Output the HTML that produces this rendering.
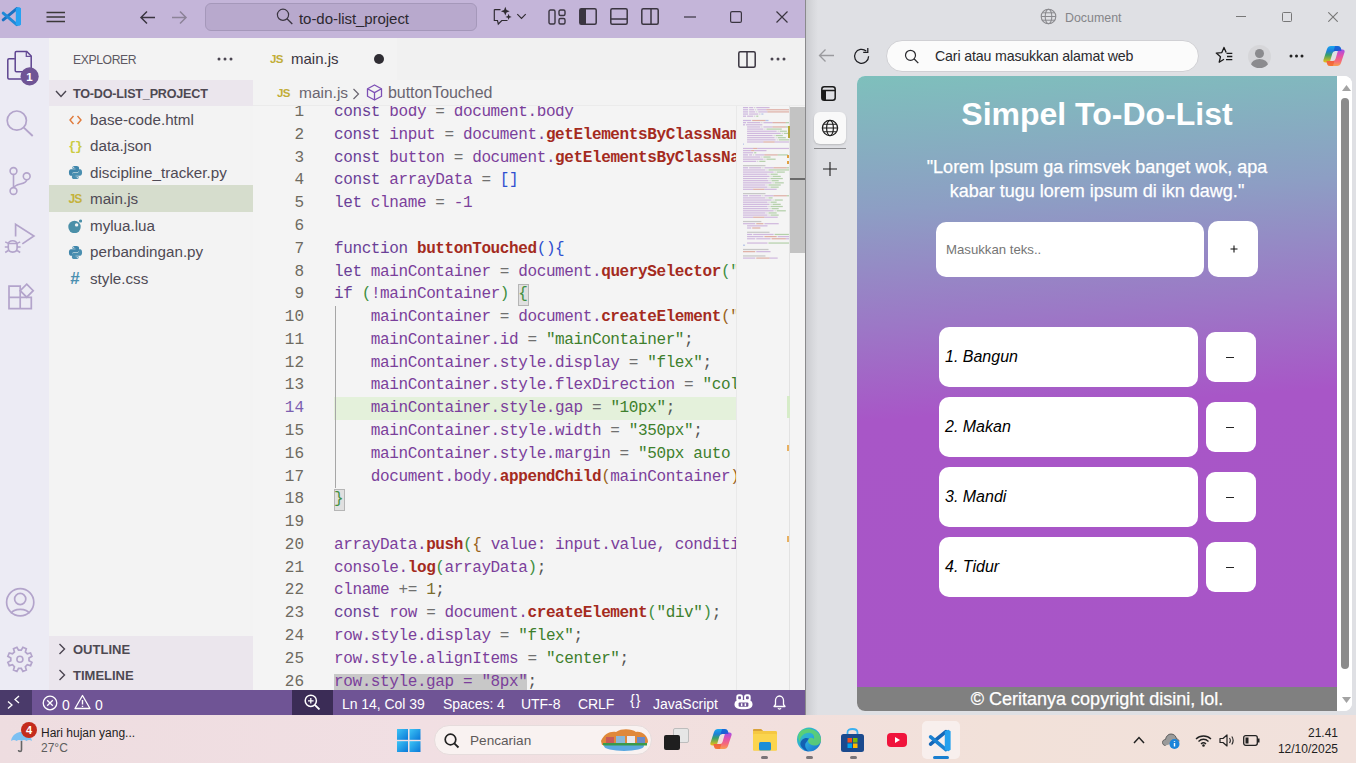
<!DOCTYPE html>
<html><head><meta charset="utf-8">
<style>
*{margin:0;padding:0;box-sizing:border-box}
html,body{width:1356px;height:763px;overflow:hidden;background:#f0e0e4;font-family:"Liberation Sans",sans-serif}
.a{position:absolute}
#vs{left:0;top:0;width:805px;height:715px;background:#f3f3f3;overflow:hidden}
#tb{left:0;top:0;width:806px;height:38px;background:#c4b5d9}
#act{left:0;top:38px;width:49px;height:652px;background:#ecebf4}
#side{left:49px;top:38px;width:204px;height:652px;background:#f3f3f3}
#ed{left:253px;top:38px;width:553px;height:652px;background:#f4f4f4}
#sb{left:0;top:690px;width:806px;height:25px;background:#6f5495;color:#fff;font-size:15px}
#edge{left:806px;top:0;width:550px;height:715px;background:#dfe0e4}
#task{left:0;top:715px;width:1356px;height:48px;background:linear-gradient(to right,#eedde0 0px,#f1dfe3 420px,#f2e0dd 800px,#f2e1d9 1000px,#f1e1dc 1356px)}
.sbt{font-size:15.2px;color:#4f4a55;white-space:pre}
.ln{left:0;width:51px;text-align:right;font-family:"Liberation Mono",monospace;font-size:16px;line-height:22.78px}
.code{left:81px;line-height:22.78px}
.k{color:#6a3f97}.v{color:#7b3f9b}.o{color:#707070}.f{color:#a42b1e;font-weight:bold}.s{color:#3e7f2c}.n{color:#7a6c2a}.b1{color:#2f4fd0}.b2{color:#3f8f3f}.b3{color:#9a6320}.p{color:#555}.bx{color:#3f8f3f}.bx2{color:#3f8f3f}.sel{color:#7b3f9b}
.sbx{position:absolute;font-size:14px;color:#fff;letter-spacing:-0.05px;white-space:pre}
.code{position:absolute;font-family:"Liberation Mono",monospace;font-size:16px;letter-spacing:-0.39px;white-space:pre;color:#7b3f9b}
</style></head><body>
<div id="vs" class="a">
  <div id="tb" class="a">
    <svg class="a" style="left:0;top:0" width="24" height="32"><path d="M3.2 19.8L16.8 8.6" stroke="#1a73c4" stroke-width="3" stroke-linecap="round"/><path d="M3.2 13.2L16.8 24.6" stroke="#1f8ad8" stroke-width="3" stroke-linecap="round"/><path d="M15.8 8.2L19 6.9L21 8.2V24.8L19 26.1L15.8 24.8Z" fill="#26a2f2"/></svg>
    <svg class="a" style="left:46px;top:11px" width="20" height="12"><path d="M0.5 1.5H19M0.5 6H19M0.5 10.5H19" stroke="#3a3838" stroke-width="1.5"/></svg>
    <svg class="a" style="left:139px;top:10px" width="17" height="15"><path d="M16 7.5H2M8 1.5L2 7.5L8 13.5" stroke="#3a3540" stroke-width="1.5" fill="none"/></svg>
    <svg class="a" style="left:171px;top:10px" width="17" height="15"><path d="M1 7.5H15M9 1.5L15 7.5L9 13.5" stroke="#8c8398" stroke-width="1.5" fill="none"/></svg>
    <div class="a" style="left:205px;top:3px;width:272px;height:28px;background:#b8a9cd;border:1px solid #a598ba;border-radius:6px"></div>
    <svg class="a" style="left:276px;top:8px" width="18" height="18"><circle cx="7" cy="6.8" r="5.6" stroke="#3a3540" stroke-width="1.2" fill="none"/><path d="M11 10.8L16.3 16" stroke="#3a3540" stroke-width="1.3"/></svg>
    <div class="a" style="left:299px;top:10px;font-size:15px;color:#2c2830;letter-spacing:-0.05px">to-do-list_project</div>
    <svg class="a" style="left:488px;top:4px" width="44" height="26"><path d="M6.3 5.6H12.5M6.3 5.6V16.5H9.5L10.3 20L13.8 16.5H19.5" stroke="#2e2a30" stroke-width="1.15" fill="none" stroke-linejoin="miter"/><path d="M17.3 2.8L18.5 6L21.7 7.2L18.5 8.4L17.3 11.6L16.1 8.4L12.9 7.2L16.1 6Z" fill="#2e2a30"/><path d="M20.6 9.8L21.4 12.1L23.7 12.9L21.4 13.7L20.6 16L19.8 13.7L17.5 12.9L19.8 12.1Z" fill="#2e2a30"/><path d="M29.3 10.2L33.5 14.4L37.7 10.2" stroke="#2e2a30" stroke-width="1.15" fill="none"/></svg>
    <svg class="a" style="left:548px;top:9px" width="18" height="16"><rect x="1" y="1" width="6" height="14" rx="1.5" stroke="#3a3540" stroke-width="1.4" fill="none"/><rect x="11" y="1" width="6" height="5.5" rx="1.5" stroke="#3a3540" stroke-width="1.4" fill="none"/><rect x="11" y="9.5" width="6" height="5.5" rx="1.5" stroke="#3a3540" stroke-width="1.4" fill="none"/></svg>
    <svg class="a" style="left:579px;top:8px" width="18" height="17"><rect x="0.8" y="0.8" width="16.4" height="15.4" rx="1.5" stroke="#3a3540" stroke-width="1.5" fill="none"/><rect x="1" y="1" width="6" height="15" fill="#3a3540"/></svg>
    <svg class="a" style="left:610px;top:8px" width="18" height="17"><rect x="0.8" y="0.8" width="16.4" height="15.4" rx="1.5" stroke="#3a3540" stroke-width="1.5" fill="none"/><path d="M1 11H17" stroke="#3a3540" stroke-width="1.5"/></svg>
    <svg class="a" style="left:641px;top:8px" width="18" height="17"><rect x="0.8" y="0.8" width="16.4" height="15.4" rx="1.5" stroke="#3a3540" stroke-width="1.5" fill="none"/><path d="M10 1V16" stroke="#3a3540" stroke-width="1.5"/></svg>
    <svg class="a" style="left:684px;top:16px" width="12" height="2"><path d="M0 1H12" stroke="#3a3540" stroke-width="1.2"/></svg>
    <svg class="a" style="left:730px;top:11px" width="12" height="12"><rect x="0.6" y="0.6" width="10.8" height="10.8" rx="1.5" stroke="#3a3540" stroke-width="1.2" fill="none"/></svg>
    <svg class="a" style="left:776px;top:11px" width="12" height="12"><path d="M0.5 0.5L11.5 11.5M11.5 0.5L0.5 11.5" stroke="#3a3540" stroke-width="1.2"/></svg>
  </div>
  <div id="act" class="a">
    <svg class="a" style="left:0;top:6px" width="48" height="48"><path d="M14.8 14.8H9Q7.8 14.8 7.8 16V33.7Q7.8 34.9 9 34.9H21" stroke="#5e4490" stroke-width="1.5" fill="none"/><path d="M16.4 7.5H26.8L31.2 12V26.5Q31.2 27.7 30 27.7H16.4Q15.2 27.7 15.2 26.5V8.7Q15.2 7.5 16.4 7.5Z" stroke="#5e4490" stroke-width="1.5" fill="none"/><path d="M26.3 7.5V12.3H31.2" stroke="#6a4f9a" stroke-width="1.3" fill="none"/><circle cx="29.6" cy="32.4" r="9.1" fill="#6f5495"/><text x="29.4" y="36.6" style="font:bold 11.5px 'Liberation Sans'" fill="#fff" text-anchor="middle">1</text></svg>
    <svg class="a" style="left:0;top:0" width="48" height="652" viewBox="0 38 48 652">
    <circle cx="16.8" cy="120.6" r="9.6" stroke="#b3a4cb" stroke-width="1.7" fill="none"/><path d="M23.8 127.6L32.7 136" stroke="#b3a4cb" stroke-width="1.9"/>
    <circle cx="13.5" cy="171" r="3.4" stroke="#b3a4cb" stroke-width="1.6" fill="none"/><circle cx="13.5" cy="191" r="3.4" stroke="#b3a4cb" stroke-width="1.6" fill="none"/><circle cx="26.7" cy="176.3" r="3.4" stroke="#b3a4cb" stroke-width="1.6" fill="none"/>
    <path d="M13.5 174.4V187.6M26.7 179.7C26.7 185 15 183 13.8 187.8" stroke="#b3a4cb" stroke-width="1.6" fill="none"/>
    <path d="M15.6 236.5V224.4L33.9 236L22.3 243.9" stroke="#b3a4cb" stroke-width="1.7" fill="none" stroke-linejoin="miter"/>
    <path d="M8.3 244.5C8.3 239.5 17.1 239.5 17.1 244.5V248C17.1 253.5 8.3 253.5 8.3 248Z" stroke="#b3a4cb" stroke-width="1.6" fill="#ecebf4"/>
    <path d="M8.3 243.6H17.1M5.2 241.8L8.3 243.4M5.2 252.5L8.3 250.5M20.2 241.8L17.1 243.4M20.2 252.5L17.1 250.5M4.8 247H8.3M17.1 247H20.6" stroke="#b3a4cb" stroke-width="1.5"/>
    <path d="M9 286.2H20.2V308.6H9ZM9 297.3H31.3V308.6H20.2" stroke="#b3a4cb" stroke-width="1.7" fill="none" stroke-linejoin="miter"/>
    <path d="M26.7 284.2L33.2 290.7L26.7 297.2L20.2 290.7Z" stroke="#b3a4cb" stroke-width="1.7" fill="none" stroke-linejoin="miter"/>
    <circle cx="20.2" cy="602.3" r="13.6" stroke="#b3a4cb" stroke-width="1.7" fill="none"/><circle cx="20.2" cy="599" r="5.6" stroke="#b3a4cb" stroke-width="1.7" fill="none"/>
    <path d="M11.2 613.5C13.5 608 26.9 608 29.2 613.5" stroke="#b3a4cb" stroke-width="1.7" fill="none"/>
    <path d="M21.26 650.20 L22.90 647.27 L26.29 648.67 L25.37 651.90 L27.30 653.83 L30.53 652.91 L31.93 656.30 L29.00 657.94 L29.00 660.66 L31.93 662.30 L30.53 665.69 L27.30 664.77 L25.37 666.70 L26.29 669.93 L22.90 671.33 L21.26 668.40 L18.54 668.40 L16.90 671.33 L13.51 669.93 L14.43 666.70 L12.50 664.77 L9.27 665.69 L7.87 662.30 L10.80 660.66 L10.80 657.94 L7.87 656.30 L9.27 652.91 L12.50 653.83 L14.43 651.90 L13.51 648.67 L16.90 647.27 L18.54 650.20Z" stroke="#b3a4cb" stroke-width="1.7" fill="none" stroke-linejoin="miter"/><circle cx="19.9" cy="659.3" r="3" stroke="#b3a4cb" stroke-width="1.6" fill="none"/>
  </svg>
  </div>
  <div id="side" class="a">
    <div class="a" style="left:24px;top:15px;font-size:12.2px;color:#5d5862;letter-spacing:-0.4px">EXPLORER</div>
    <svg class="a" style="left:168px;top:19px" width="16" height="4"><circle cx="2" cy="2" r="1.5" fill="#4a4550"/><circle cx="8" cy="2" r="1.5" fill="#4a4550"/><circle cx="14" cy="2" r="1.5" fill="#4a4550"/></svg>
    <div class="a" style="left:0;top:42px;width:204px;height:26px;background:#ebe6ed"></div>
    <svg class="a" style="left:6px;top:52px" width="12" height="8"><path d="M1 1L6 6.5L11 1" stroke="#4a4550" stroke-width="1.4" fill="none"/></svg>
    <div class="a" style="left:24px;top:48.5px;font:bold 12.6px 'Liberation Sans';color:#4e4952;letter-spacing:-0.2px">TO-DO-LIST_PROJECT</div>
    <div class="a" style="left:0;top:68.00px;width:204px;height:26.4px;"><div class="a" style="left:18px;top:6px;width:16px;height:16px;display:flex;align-items:center;justify-content:center"><svg width="13" height="10"><path d="M4.5 1L1 5L4.5 9M8.5 1L12 5L8.5 9" stroke="#e07a3a" stroke-width="1.4" fill="none"/></svg></div><div class="a sbt" style="left:41px;top:5px">base-code.html</div></div>
<div class="a" style="left:0;top:94.45px;width:204px;height:26.4px;"><div class="a" style="left:18px;top:6px;width:16px;height:16px;display:flex;align-items:center;justify-content:center"><span style="color:#cbcb41;font:bold 13px 'Liberation Mono';letter-spacing:-1px">{}</span></div><div class="a sbt" style="left:41px;top:5px">data.json</div></div>
<div class="a" style="left:0;top:120.90px;width:204px;height:26.4px;"><div class="a" style="left:18px;top:6px;width:16px;height:16px;display:flex;align-items:center;justify-content:center"><svg width="15" height="15" viewBox="0 0 16 16"><path d="M7.9 1C4.5 1 4.7 2.5 4.7 2.5V4.1H8V4.6H3.4S1 4.3 1 8S3.1 11.5 3.1 11.5H4.4V9.8S4.3 7.7 6.5 7.7H9.8S11.8 7.7 11.8 5.7V2.8S12.1 1 7.9 1ZM6.1 2C6.5 2 6.7 2.3 6.7 2.6S6.5 3.2 6.1 3.2S5.5 3 5.5 2.6S5.8 2 6.1 2Z" fill="#3f86ab"/><path d="M8.1 15C11.5 15 11.3 13.5 11.3 13.5V11.9H8V11.4H12.6S15 11.7 15 8S12.9 4.5 12.9 4.5H11.6V6.2S11.7 8.3 9.5 8.3H6.2S4.2 8.3 4.2 10.3V13.2S3.9 15 8.1 15ZM9.9 14C9.5 14 9.3 13.7 9.3 13.4S9.5 12.8 9.9 12.8S10.5 13 10.5 13.4S10.2 14 9.9 14Z" fill="#4a8fb0"/></svg></div><div class="a sbt" style="left:41px;top:5px">discipline_tracker.py</div></div>
<div class="a" style="left:0;top:147.35px;width:204px;height:26.4px;background:#d6ddcd;"><div class="a" style="left:18px;top:6px;width:16px;height:16px;display:flex;align-items:center;justify-content:center"><span style="color:#c4b23c;font:bold 12px 'Liberation Sans';letter-spacing:-0.8px">JS</span></div><div class="a sbt" style="left:41px;top:5px">main.js</div></div>
<div class="a" style="left:0;top:173.80px;width:204px;height:26.4px;"><div class="a" style="left:18px;top:6px;width:16px;height:16px;display:flex;align-items:center;justify-content:center"><svg width="14" height="14"><circle cx="6.5" cy="8" r="6.2" fill="#4a8fa8"/><circle cx="8.6" cy="5.9" r="1.7" fill="#f3f3f3"/><circle cx="12.5" cy="2" r="1.6" fill="#4a8fa8"/></svg></div><div class="a sbt" style="left:41px;top:5px">mylua.lua</div></div>
<div class="a" style="left:0;top:200.25px;width:204px;height:26.4px;"><div class="a" style="left:18px;top:6px;width:16px;height:16px;display:flex;align-items:center;justify-content:center"><svg width="15" height="15" viewBox="0 0 16 16"><path d="M7.9 1C4.5 1 4.7 2.5 4.7 2.5V4.1H8V4.6H3.4S1 4.3 1 8S3.1 11.5 3.1 11.5H4.4V9.8S4.3 7.7 6.5 7.7H9.8S11.8 7.7 11.8 5.7V2.8S12.1 1 7.9 1ZM6.1 2C6.5 2 6.7 2.3 6.7 2.6S6.5 3.2 6.1 3.2S5.5 3 5.5 2.6S5.8 2 6.1 2Z" fill="#3f86ab"/><path d="M8.1 15C11.5 15 11.3 13.5 11.3 13.5V11.9H8V11.4H12.6S15 11.7 15 8S12.9 4.5 12.9 4.5H11.6V6.2S11.7 8.3 9.5 8.3H6.2S4.2 8.3 4.2 10.3V13.2S3.9 15 8.1 15ZM9.9 14C9.5 14 9.3 13.7 9.3 13.4S9.5 12.8 9.9 12.8S10.5 13 10.5 13.4S10.2 14 9.9 14Z" fill="#4a8fb0"/></svg></div><div class="a sbt" style="left:41px;top:5px">perbandingan.py</div></div>
<div class="a" style="left:0;top:226.70px;width:204px;height:26.4px;"><div class="a" style="left:18px;top:6px;width:16px;height:16px;display:flex;align-items:center;justify-content:center"><span style="color:#4a8fb0;font:bold 17px 'Liberation Sans'">#</span></div><div class="a sbt" style="left:41px;top:5px">style.css</div></div>

    <div class="a" style="left:0;top:598px;width:204px;height:54px;background:#ebe6ed"></div>
    <svg class="a" style="left:9px;top:605px" width="8" height="12"><path d="M1.5 1L6.5 6L1.5 11" stroke="#4a4550" stroke-width="1.4" fill="none"/></svg>
    <div class="a" style="left:24px;top:604px;font:bold 13px 'Liberation Sans';color:#4e4952">OUTLINE</div>
    <svg class="a" style="left:9px;top:631px" width="8" height="12"><path d="M1.5 1L6.5 6L1.5 11" stroke="#4a4550" stroke-width="1.4" fill="none"/></svg>
    <div class="a" style="left:24px;top:630px;font:bold 13px 'Liberation Sans';color:#4e4952">TIMELINE</div>
  </div>
  <div id="ed" class="a">
    <div class="a" style="left:0;top:0;width:144px;height:42px;background:#f3f3f3"></div>
    <div class="a" style="left:144px;top:0;width:409px;height:42px;background:#f1f1f1"></div>
    <div class="a" style="left:17px;top:14.5px;font:bold 11.5px 'Liberation Sans';color:#c1ad37;letter-spacing:-0.6px">JS</div>
    <div class="a" style="left:38px;top:12px;font-size:15px;color:#3a3540">main.js</div>
    <div class="a" style="left:121px;top:16px;width:10px;height:10px;border-radius:50%;background:#2f2d33"></div>
    <svg class="a" style="left:485px;top:13px" width="18" height="17"><rect x="0.8" y="0.8" width="16.4" height="15.4" rx="1.5" stroke="#3a3540" stroke-width="1.5" fill="none"/><path d="M9 1V16" stroke="#3a3540" stroke-width="1.5"/></svg>
    <svg class="a" style="left:517px;top:19px" width="16" height="4"><circle cx="2" cy="2" r="1.5" fill="#4a4550"/><circle cx="8" cy="2" r="1.5" fill="#4a4550"/><circle cx="14" cy="2" r="1.5" fill="#4a4550"/></svg>
<!--CODE--><div class="a" style="left:0;top:42px;width:553px;height:610px;background:#f4f4f4;overflow:hidden">
      <div class="a" style="left:0;top:0;width:483px;height:610px;overflow:hidden">
      <div class="a" style="left:81px;top:317.2px;width:402px;height:22.78px;background:#e4f1db"></div>
      <div class="a" style="left:81px;top:593.6px;width:193px;height:19.78px;background:#c8c8c8"></div>
      <div class="a" style="left:82px;top:226.1px;width:1px;height:182.2px;background:#a6a6a6"></div>
      <div class="a" style="left:265.2px;top:204.4px;width:11.2px;height:21.8px;border:1px solid #b5b5b5;background:#e0e0e0"></div>
      <div class="a" style="left:81px;top:409.4px;width:11.2px;height:21.8px;border:1px solid #b5b5b5;background:#e0e0e0"></div>
      <div class="a ln" style="top:21.11px;color:#6e6a60">1</div><div class="a code" style="top:21.11px"><span class="k">const</span><span class="v"> body </span><span class="o">=</span><span class="v"> document.body</span></div>
<div class="a ln" style="top:43.89px;color:#6e6a60">2</div><div class="a code" style="top:43.89px"><span class="k">const</span><span class="v"> input </span><span class="o">=</span><span class="v"> document.</span><span class="f">getElementsByClassName</span><span class="b2">(&quot;</span><span class="s">input</span></div>
<div class="a ln" style="top:66.67px;color:#6e6a60">3</div><div class="a code" style="top:66.67px"><span class="k">const</span><span class="v"> button </span><span class="o">=</span><span class="v"> document.</span><span class="f">getElementsByClassName</span><span class="b2">(</span></div>
<div class="a ln" style="top:89.45px;color:#6e6a60">4</div><div class="a code" style="top:89.45px"><span class="k">const</span><span class="v"> arrayData </span><span class="o">=</span><span class="v"> </span><span class="b1">[]</span></div>
<div class="a ln" style="top:112.23px;color:#6e6a60">5</div><div class="a code" style="top:112.23px"><span class="k">let</span><span class="v"> clname </span><span class="o">=</span><span class="v"> </span><span class="v">-1</span></div>
<div class="a ln" style="top:135.01px;color:#6e6a60">6</div><div class="a code" style="top:135.01px"></div>
<div class="a ln" style="top:157.79px;color:#6e6a60">7</div><div class="a code" style="top:157.79px"><span class="k">function</span><span class="v"> </span><span class="f">buttonTouched</span><span class="b1">(){</span></div>
<div class="a ln" style="top:180.57px;color:#6e6a60">8</div><div class="a code" style="top:180.57px"><span class="k">let</span><span class="v"> mainContainer </span><span class="o">=</span><span class="v"> document.</span><span class="f">querySelector</span><span class="b2">(&quot;</span></div>
<div class="a ln" style="top:203.35px;color:#6e6a60">9</div><div class="a code" style="top:203.35px"><span class="k">if</span><span class="v"> </span><span class="b2">(</span><span class="v">!mainContainer</span><span class="b2">)</span><span class="v"> </span><span class="bx">{</span></div>
<div class="a ln" style="top:226.13px;color:#6e6a60">10</div><div class="a code" style="top:226.13px"><span class="v">    mainContainer </span><span class="o">=</span><span class="v"> document.</span><span class="f">createElement</span><span class="b3">(&quot;</span></div>
<div class="a ln" style="top:248.91px;color:#6e6a60">11</div><div class="a code" style="top:248.91px"><span class="v">    mainContainer.id </span><span class="o">=</span><span class="v"> </span><span class="s">&quot;mainContainer&quot;</span><span class="p">;</span></div>
<div class="a ln" style="top:271.69px;color:#6e6a60">12</div><div class="a code" style="top:271.69px"><span class="v">    mainContainer.style.display </span><span class="o">=</span><span class="v"> </span><span class="s">&quot;flex&quot;</span><span class="p">;</span></div>
<div class="a ln" style="top:294.47px;color:#6e6a60">13</div><div class="a code" style="top:294.47px"><span class="v">    mainContainer.style.flexDirection </span><span class="o">=</span><span class="v"> </span><span class="s">&quot;column&quot;</span></div>
<div class="a ln" style="top:317.25px;color:#7c5fb0">14</div><div class="a code" style="top:317.25px"><span class="v">    mainContainer.style.gap </span><span class="o">=</span><span class="v"> </span><span class="s">&quot;10px&quot;</span><span class="p">;</span></div>
<div class="a ln" style="top:340.03px;color:#6e6a60">15</div><div class="a code" style="top:340.03px"><span class="v">    mainContainer.style.width </span><span class="o">=</span><span class="v"> </span><span class="s">&quot;350px&quot;</span><span class="p">;</span></div>
<div class="a ln" style="top:362.81px;color:#6e6a60">16</div><div class="a code" style="top:362.81px"><span class="v">    mainContainer.style.margin </span><span class="o">=</span><span class="v"> </span><span class="s">&quot;50px auto 0&quot;</span></div>
<div class="a ln" style="top:385.59px;color:#6e6a60">17</div><div class="a code" style="top:385.59px"><span class="v">    document.body.</span><span class="f">appendChild</span><span class="b3">(</span><span class="v">mainContainer</span><span class="b3">)</span></div>
<div class="a ln" style="top:408.37px;color:#6e6a60">18</div><div class="a code" style="top:408.37px"><span class="bx2">}</span></div>
<div class="a ln" style="top:431.15px;color:#6e6a60">19</div><div class="a code" style="top:431.15px"></div>
<div class="a ln" style="top:453.93px;color:#6e6a60">20</div><div class="a code" style="top:453.93px"><span class="v">arrayData.</span><span class="f">push</span><span class="b2">(</span><span class="b3">{</span><span class="v"> value: input.value, condition</span></div>
<div class="a ln" style="top:476.71px;color:#6e6a60">21</div><div class="a code" style="top:476.71px"><span class="v">console.</span><span class="f">log</span><span class="b2">(</span><span class="v">arrayData</span><span class="b2">)</span><span class="p">;</span></div>
<div class="a ln" style="top:499.49px;color:#6e6a60">22</div><div class="a code" style="top:499.49px"><span class="v">clname </span><span class="o">+=</span><span class="v"> </span><span class="n">1</span><span class="p">;</span></div>
<div class="a ln" style="top:522.27px;color:#6e6a60">23</div><div class="a code" style="top:522.27px"><span class="k">const</span><span class="v"> row </span><span class="o">=</span><span class="v"> document.</span><span class="f">createElement</span><span class="b2">(</span><span class="s">&quot;div&quot;</span><span class="b2">)</span><span class="p">;</span></div>
<div class="a ln" style="top:545.05px;color:#6e6a60">24</div><div class="a code" style="top:545.05px"><span class="v">row.style.display </span><span class="o">=</span><span class="v"> </span><span class="s">&quot;flex&quot;</span><span class="p">;</span></div>
<div class="a ln" style="top:567.83px;color:#6e6a60">25</div><div class="a code" style="top:567.83px"><span class="v">row.style.alignItems </span><span class="o">=</span><span class="v"> </span><span class="s">&quot;center&quot;</span><span class="p">;</span></div>
<div class="a ln" style="top:590.61px;color:#6e6a60">26</div><div class="a code" style="top:590.61px"><span class="sel">row.style.gap = &quot;8px&quot;</span><span class="p">;</span></div>

      </div>
      <div class="a" style="left:483px;top:0;width:1px;height:610px;background:#e9e9e9"></div>
      <!--MINIMAP--><svg class="a" style="left:490px;top:27px" width="46" height="160"><rect x="0.00" y="0.00" width="5.10" height="1.2" fill="#b08bd0" fill-opacity="0.6"/><rect x="6.12" y="0.00" width="4.08" height="1.2" fill="#b890cf" fill-opacity="0.6"/><rect x="11.22" y="0.00" width="1.02" height="1.2" fill="#b0b0b0" fill-opacity="0.6"/><rect x="13.26" y="0.00" width="13.26" height="1.2" fill="#b890cf" fill-opacity="0.6"/><rect x="0.00" y="2.15" width="5.10" height="1.2" fill="#b08bd0" fill-opacity="0.6"/><rect x="6.12" y="2.15" width="5.10" height="1.2" fill="#b890cf" fill-opacity="0.6"/><rect x="12.24" y="2.15" width="1.02" height="1.2" fill="#b0b0b0" fill-opacity="0.6"/><rect x="14.28" y="2.15" width="9.18" height="1.2" fill="#b890cf" fill-opacity="0.6"/><rect x="23.46" y="2.15" width="22.44" height="1.2" fill="#d08070" fill-opacity="0.6"/><rect x="45.90" y="2.15" width="8.16" height="1.2" fill="#88b878" fill-opacity="0.6"/><rect x="0.00" y="4.30" width="5.10" height="1.2" fill="#b08bd0" fill-opacity="0.6"/><rect x="6.12" y="4.30" width="6.12" height="1.2" fill="#b890cf" fill-opacity="0.6"/><rect x="13.26" y="4.30" width="1.02" height="1.2" fill="#b0b0b0" fill-opacity="0.6"/><rect x="15.30" y="4.30" width="9.18" height="1.2" fill="#b890cf" fill-opacity="0.6"/><rect x="24.48" y="4.30" width="22.44" height="1.2" fill="#d08070" fill-opacity="0.6"/><rect x="46.92" y="4.30" width="9.18" height="1.2" fill="#88b878" fill-opacity="0.6"/><rect x="0.00" y="6.45" width="5.10" height="1.2" fill="#b08bd0" fill-opacity="0.6"/><rect x="6.12" y="6.45" width="9.18" height="1.2" fill="#b890cf" fill-opacity="0.6"/><rect x="16.32" y="6.45" width="1.02" height="1.2" fill="#b0b0b0" fill-opacity="0.6"/><rect x="18.36" y="6.45" width="2.04" height="1.2" fill="#8aa0e0" fill-opacity="0.6"/><rect x="0.00" y="8.60" width="3.06" height="1.2" fill="#b08bd0" fill-opacity="0.6"/><rect x="4.08" y="8.60" width="6.12" height="1.2" fill="#b890cf" fill-opacity="0.6"/><rect x="11.22" y="8.60" width="1.02" height="1.2" fill="#b0b0b0" fill-opacity="0.6"/><rect x="13.26" y="8.60" width="2.04" height="1.2" fill="#88b878" fill-opacity="0.6"/><rect x="0.00" y="12.90" width="8.16" height="1.2" fill="#b08bd0" fill-opacity="0.6"/><rect x="9.18" y="12.90" width="13.26" height="1.2" fill="#d08070" fill-opacity="0.6"/><rect x="22.44" y="12.90" width="3.06" height="1.2" fill="#8aa0e0" fill-opacity="0.6"/><rect x="0.00" y="15.05" width="3.06" height="1.2" fill="#b08bd0" fill-opacity="0.6"/><rect x="4.08" y="15.05" width="13.26" height="1.2" fill="#b890cf" fill-opacity="0.6"/><rect x="18.36" y="15.05" width="1.02" height="1.2" fill="#b0b0b0" fill-opacity="0.6"/><rect x="20.40" y="15.05" width="9.18" height="1.2" fill="#b890cf" fill-opacity="0.6"/><rect x="29.58" y="15.05" width="13.26" height="1.2" fill="#d08070" fill-opacity="0.6"/><rect x="42.84" y="15.05" width="15.30" height="1.2" fill="#88b878" fill-opacity="0.6"/><rect x="0.00" y="17.20" width="2.04" height="1.2" fill="#b08bd0" fill-opacity="0.6"/><rect x="3.06" y="17.20" width="16.32" height="1.2" fill="#b890cf" fill-opacity="0.6"/><rect x="4.08" y="19.35" width="13.26" height="1.2" fill="#b890cf" fill-opacity="0.6"/><rect x="18.36" y="19.35" width="1.02" height="1.2" fill="#b0b0b0" fill-opacity="0.6"/><rect x="20.40" y="19.35" width="9.18" height="1.2" fill="#b890cf" fill-opacity="0.6"/><rect x="29.58" y="19.35" width="13.26" height="1.2" fill="#d08070" fill-opacity="0.6"/><rect x="42.84" y="19.35" width="15.30" height="1.2" fill="#88b878" fill-opacity="0.6"/><rect x="4.08" y="21.50" width="16.32" height="1.2" fill="#b890cf" fill-opacity="0.6"/><rect x="21.42" y="21.50" width="1.02" height="1.2" fill="#b0b0b0" fill-opacity="0.6"/><rect x="23.46" y="21.50" width="15.30" height="1.2" fill="#88b878" fill-opacity="0.6"/><rect x="4.08" y="23.65" width="29.58" height="1.2" fill="#b890cf" fill-opacity="0.6"/><rect x="34.68" y="23.65" width="1.02" height="1.2" fill="#b0b0b0" fill-opacity="0.6"/><rect x="36.72" y="23.65" width="7.14" height="1.2" fill="#88b878" fill-opacity="0.6"/><rect x="4.08" y="25.80" width="33.66" height="1.2" fill="#b890cf" fill-opacity="0.6"/><rect x="38.76" y="25.80" width="1.02" height="1.2" fill="#b0b0b0" fill-opacity="0.6"/><rect x="40.80" y="25.80" width="10.20" height="1.2" fill="#88b878" fill-opacity="0.6"/><rect x="4.08" y="27.95" width="25.50" height="1.2" fill="#b890cf" fill-opacity="0.6"/><rect x="30.60" y="27.95" width="1.02" height="1.2" fill="#b0b0b0" fill-opacity="0.6"/><rect x="32.64" y="27.95" width="7.14" height="1.2" fill="#88b878" fill-opacity="0.6"/><rect x="4.08" y="30.10" width="27.54" height="1.2" fill="#b890cf" fill-opacity="0.6"/><rect x="32.64" y="30.10" width="1.02" height="1.2" fill="#b0b0b0" fill-opacity="0.6"/><rect x="34.68" y="30.10" width="8.16" height="1.2" fill="#88b878" fill-opacity="0.6"/><rect x="4.08" y="32.25" width="28.56" height="1.2" fill="#b890cf" fill-opacity="0.6"/><rect x="33.66" y="32.25" width="1.02" height="1.2" fill="#b0b0b0" fill-opacity="0.6"/><rect x="35.70" y="32.25" width="13.26" height="1.2" fill="#88b878" fill-opacity="0.6"/><rect x="4.08" y="34.40" width="16.32" height="1.2" fill="#b890cf" fill-opacity="0.6"/><rect x="20.40" y="34.40" width="11.22" height="1.2" fill="#d08070" fill-opacity="0.6"/><rect x="31.62" y="34.40" width="16.32" height="1.2" fill="#b890cf" fill-opacity="0.6"/><rect x="0.00" y="36.55" width="1.02" height="1.2" fill="#8aa0e0" fill-opacity="0.6"/><rect x="0.00" y="40.85" width="10.20" height="1.2" fill="#b890cf" fill-opacity="0.6"/><rect x="10.20" y="40.85" width="4.08" height="1.2" fill="#d08070" fill-opacity="0.6"/><rect x="14.28" y="40.85" width="51.00" height="1.2" fill="#b890cf" fill-opacity="0.6"/><rect x="0.00" y="43.00" width="8.16" height="1.2" fill="#b890cf" fill-opacity="0.6"/><rect x="8.16" y="43.00" width="3.06" height="1.2" fill="#d08070" fill-opacity="0.6"/><rect x="11.22" y="43.00" width="12.24" height="1.2" fill="#b890cf" fill-opacity="0.6"/><rect x="0.00" y="45.15" width="10.20" height="1.2" fill="#b890cf" fill-opacity="0.6"/><rect x="11.22" y="45.15" width="2.04" height="1.2" fill="#88b878" fill-opacity="0.6"/><rect x="0.00" y="47.30" width="5.10" height="1.2" fill="#b08bd0" fill-opacity="0.6"/><rect x="6.12" y="47.30" width="3.06" height="1.2" fill="#b890cf" fill-opacity="0.6"/><rect x="10.20" y="47.30" width="1.02" height="1.2" fill="#b0b0b0" fill-opacity="0.6"/><rect x="12.24" y="47.30" width="9.18" height="1.2" fill="#b890cf" fill-opacity="0.6"/><rect x="21.42" y="47.30" width="13.26" height="1.2" fill="#d08070" fill-opacity="0.6"/><rect x="34.68" y="47.30" width="10.20" height="1.2" fill="#88b878" fill-opacity="0.6"/><rect x="0.00" y="49.45" width="17.34" height="1.2" fill="#b890cf" fill-opacity="0.6"/><rect x="18.36" y="49.45" width="1.02" height="1.2" fill="#b0b0b0" fill-opacity="0.6"/><rect x="20.40" y="49.45" width="7.14" height="1.2" fill="#88b878" fill-opacity="0.6"/><rect x="0.00" y="51.60" width="20.40" height="1.2" fill="#b890cf" fill-opacity="0.6"/><rect x="21.42" y="51.60" width="1.02" height="1.2" fill="#b0b0b0" fill-opacity="0.6"/><rect x="23.46" y="51.60" width="9.18" height="1.2" fill="#88b878" fill-opacity="0.6"/><rect x="0.00" y="53.75" width="13.26" height="1.2" fill="#b890cf" fill-opacity="0.6"/><rect x="14.28" y="53.75" width="1.02" height="1.2" fill="#b0b0b0" fill-opacity="0.6"/><rect x="16.32" y="53.75" width="6.12" height="1.2" fill="#88b878" fill-opacity="0.6"/><rect x="0.00" y="58.05" width="22.44" height="1.2" fill="#a8a8a8" fill-opacity="0.6"/><rect x="0.00" y="60.20" width="5.10" height="1.2" fill="#b08bd0" fill-opacity="0.6"/><rect x="6.12" y="60.20" width="12.24" height="1.2" fill="#b890cf" fill-opacity="0.6"/><rect x="19.38" y="60.20" width="1.02" height="1.2" fill="#b0b0b0" fill-opacity="0.6"/><rect x="21.42" y="60.20" width="9.18" height="1.2" fill="#b890cf" fill-opacity="0.6"/><rect x="30.60" y="60.20" width="13.26" height="1.2" fill="#d08070" fill-opacity="0.6"/><rect x="43.86" y="60.20" width="6.12" height="1.2" fill="#88b878" fill-opacity="0.6"/><rect x="0.00" y="62.35" width="22.44" height="1.2" fill="#b890cf" fill-opacity="0.6"/><rect x="23.46" y="62.35" width="1.02" height="1.2" fill="#b0b0b0" fill-opacity="0.6"/><rect x="25.50" y="62.35" width="30.60" height="1.2" fill="#88b878" fill-opacity="0.6"/><rect x="0.00" y="64.50" width="30.60" height="1.2" fill="#b890cf" fill-opacity="0.6"/><rect x="31.62" y="64.50" width="1.02" height="1.2" fill="#b0b0b0" fill-opacity="0.6"/><rect x="33.66" y="64.50" width="8.16" height="1.2" fill="#88b878" fill-opacity="0.6"/><rect x="0.00" y="66.65" width="24.48" height="1.2" fill="#b890cf" fill-opacity="0.6"/><rect x="25.50" y="66.65" width="1.02" height="1.2" fill="#b0b0b0" fill-opacity="0.6"/><rect x="27.54" y="66.65" width="7.14" height="1.2" fill="#88b878" fill-opacity="0.6"/><rect x="0.00" y="68.80" width="26.52" height="1.2" fill="#b890cf" fill-opacity="0.6"/><rect x="27.54" y="68.80" width="1.02" height="1.2" fill="#b0b0b0" fill-opacity="0.6"/><rect x="29.58" y="68.80" width="8.16" height="1.2" fill="#88b878" fill-opacity="0.6"/><rect x="0.00" y="70.95" width="24.48" height="1.2" fill="#b890cf" fill-opacity="0.6"/><rect x="25.50" y="70.95" width="1.02" height="1.2" fill="#b0b0b0" fill-opacity="0.6"/><rect x="27.54" y="70.95" width="12.24" height="1.2" fill="#88b878" fill-opacity="0.6"/><rect x="0.00" y="73.10" width="25.50" height="1.2" fill="#b890cf" fill-opacity="0.6"/><rect x="26.52" y="73.10" width="1.02" height="1.2" fill="#b0b0b0" fill-opacity="0.6"/><rect x="28.56" y="73.10" width="7.14" height="1.2" fill="#88b878" fill-opacity="0.6"/><rect x="0.00" y="75.25" width="28.56" height="1.2" fill="#b890cf" fill-opacity="0.6"/><rect x="29.58" y="75.25" width="1.02" height="1.2" fill="#b0b0b0" fill-opacity="0.6"/><rect x="31.62" y="75.25" width="9.18" height="1.2" fill="#88b878" fill-opacity="0.6"/><rect x="0.00" y="77.40" width="22.44" height="1.2" fill="#b890cf" fill-opacity="0.6"/><rect x="23.46" y="77.40" width="1.02" height="1.2" fill="#b0b0b0" fill-opacity="0.6"/><rect x="25.50" y="77.40" width="12.24" height="1.2" fill="#88b878" fill-opacity="0.6"/><rect x="0.00" y="79.55" width="24.48" height="1.2" fill="#b890cf" fill-opacity="0.6"/><rect x="25.50" y="79.55" width="1.02" height="1.2" fill="#b0b0b0" fill-opacity="0.6"/><rect x="27.54" y="79.55" width="8.16" height="1.2" fill="#88b878" fill-opacity="0.6"/><rect x="0.00" y="81.70" width="10.20" height="1.2" fill="#b890cf" fill-opacity="0.6"/><rect x="10.20" y="81.70" width="11.22" height="1.2" fill="#d08070" fill-opacity="0.6"/><rect x="21.42" y="81.70" width="12.24" height="1.2" fill="#b890cf" fill-opacity="0.6"/><rect x="0.00" y="86.00" width="22.44" height="1.2" fill="#a8a8a8" fill-opacity="0.6"/><rect x="0.00" y="88.15" width="5.10" height="1.2" fill="#b08bd0" fill-opacity="0.6"/><rect x="6.12" y="88.15" width="12.24" height="1.2" fill="#b890cf" fill-opacity="0.6"/><rect x="19.38" y="88.15" width="1.02" height="1.2" fill="#b0b0b0" fill-opacity="0.6"/><rect x="21.42" y="88.15" width="9.18" height="1.2" fill="#b890cf" fill-opacity="0.6"/><rect x="30.60" y="88.15" width="13.26" height="1.2" fill="#d08070" fill-opacity="0.6"/><rect x="43.86" y="88.15" width="9.18" height="1.2" fill="#88b878" fill-opacity="0.6"/><rect x="0.00" y="90.30" width="22.44" height="1.2" fill="#b890cf" fill-opacity="0.6"/><rect x="23.46" y="90.30" width="1.02" height="1.2" fill="#b0b0b0" fill-opacity="0.6"/><rect x="25.50" y="90.30" width="4.08" height="1.2" fill="#88b878" fill-opacity="0.6"/><rect x="0.00" y="92.45" width="28.56" height="1.2" fill="#b890cf" fill-opacity="0.6"/><rect x="29.58" y="92.45" width="1.02" height="1.2" fill="#b0b0b0" fill-opacity="0.6"/><rect x="31.62" y="92.45" width="8.16" height="1.2" fill="#88b878" fill-opacity="0.6"/><rect x="0.00" y="94.60" width="24.48" height="1.2" fill="#b890cf" fill-opacity="0.6"/><rect x="25.50" y="94.60" width="1.02" height="1.2" fill="#b0b0b0" fill-opacity="0.6"/><rect x="27.54" y="94.60" width="6.12" height="1.2" fill="#88b878" fill-opacity="0.6"/><rect x="0.00" y="96.75" width="26.52" height="1.2" fill="#b890cf" fill-opacity="0.6"/><rect x="27.54" y="96.75" width="1.02" height="1.2" fill="#b0b0b0" fill-opacity="0.6"/><rect x="29.58" y="96.75" width="8.16" height="1.2" fill="#88b878" fill-opacity="0.6"/><rect x="0.00" y="98.90" width="24.48" height="1.2" fill="#b890cf" fill-opacity="0.6"/><rect x="25.50" y="98.90" width="1.02" height="1.2" fill="#b0b0b0" fill-opacity="0.6"/><rect x="27.54" y="98.90" width="12.24" height="1.2" fill="#88b878" fill-opacity="0.6"/><rect x="0.00" y="101.05" width="25.50" height="1.2" fill="#b890cf" fill-opacity="0.6"/><rect x="26.52" y="101.05" width="1.02" height="1.2" fill="#b0b0b0" fill-opacity="0.6"/><rect x="28.56" y="101.05" width="7.14" height="1.2" fill="#88b878" fill-opacity="0.6"/><rect x="0.00" y="103.20" width="30.60" height="1.2" fill="#b890cf" fill-opacity="0.6"/><rect x="31.62" y="103.20" width="1.02" height="1.2" fill="#b0b0b0" fill-opacity="0.6"/><rect x="33.66" y="103.20" width="9.18" height="1.2" fill="#88b878" fill-opacity="0.6"/><rect x="0.00" y="105.35" width="22.44" height="1.2" fill="#b890cf" fill-opacity="0.6"/><rect x="23.46" y="105.35" width="1.02" height="1.2" fill="#b0b0b0" fill-opacity="0.6"/><rect x="25.50" y="105.35" width="8.16" height="1.2" fill="#88b878" fill-opacity="0.6"/><rect x="0.00" y="107.50" width="24.48" height="1.2" fill="#b890cf" fill-opacity="0.6"/><rect x="25.50" y="107.50" width="1.02" height="1.2" fill="#b0b0b0" fill-opacity="0.6"/><rect x="27.54" y="107.50" width="8.16" height="1.2" fill="#88b878" fill-opacity="0.6"/><rect x="0.00" y="109.65" width="10.20" height="1.2" fill="#b890cf" fill-opacity="0.6"/><rect x="10.20" y="109.65" width="11.22" height="1.2" fill="#d08070" fill-opacity="0.6"/><rect x="21.42" y="109.65" width="13.26" height="1.2" fill="#b890cf" fill-opacity="0.6"/><rect x="0.00" y="113.95" width="18.36" height="1.2" fill="#a8a8a8" fill-opacity="0.6"/><rect x="0.00" y="116.10" width="12.24" height="1.2" fill="#b890cf" fill-opacity="0.6"/><rect x="13.26" y="116.10" width="7.14" height="1.2" fill="#d08070" fill-opacity="0.6"/><rect x="21.42" y="116.10" width="14.28" height="1.2" fill="#b890cf" fill-opacity="0.6"/><rect x="4.08" y="118.25" width="20.40" height="1.2" fill="#b890cf" fill-opacity="0.6"/><rect x="4.08" y="120.40" width="4.08" height="1.2" fill="#b890cf" fill-opacity="0.6"/><rect x="9.18" y="120.40" width="8.16" height="1.2" fill="#d08070" fill-opacity="0.6"/><rect x="4.08" y="124.70" width="22.44" height="1.2" fill="#a8a8a8" fill-opacity="0.6"/><rect x="4.08" y="126.85" width="5.10" height="1.2" fill="#b08bd0" fill-opacity="0.6"/><rect x="10.20" y="126.85" width="20.40" height="1.2" fill="#b890cf" fill-opacity="0.6"/><rect x="31.62" y="126.85" width="14.28" height="1.2" fill="#88b878" fill-opacity="0.6"/><rect x="46.92" y="126.85" width="6.12" height="1.2" fill="#b890cf" fill-opacity="0.6"/><rect x="4.08" y="129.00" width="16.32" height="1.2" fill="#b890cf" fill-opacity="0.6"/><rect x="21.42" y="129.00" width="12.24" height="1.2" fill="#d08070" fill-opacity="0.6"/><rect x="34.68" y="129.00" width="18.36" height="1.2" fill="#b890cf" fill-opacity="0.6"/><rect x="4.08" y="131.15" width="8.16" height="1.2" fill="#b890cf" fill-opacity="0.6"/><rect x="13.26" y="131.15" width="14.28" height="1.2" fill="#b890cf" fill-opacity="0.6"/><rect x="28.56" y="131.15" width="14.28" height="1.2" fill="#d08070" fill-opacity="0.6"/><rect x="42.84" y="131.15" width="6.12" height="1.2" fill="#b890cf" fill-opacity="0.6"/><rect x="4.08" y="135.45" width="20.40" height="1.2" fill="#b890cf" fill-opacity="0.6"/><rect x="25.50" y="135.45" width="23.46" height="1.2" fill="#88b878" fill-opacity="0.6"/><rect x="0.00" y="137.60" width="2.04" height="1.2" fill="#8aa0e0" fill-opacity="0.6"/><rect x="0.00" y="141.90" width="25.50" height="1.2" fill="#a8a8a8" fill-opacity="0.6"/><rect x="0.00" y="144.05" width="12.24" height="1.2" fill="#d08070" fill-opacity="0.6"/><rect x="13.26" y="144.05" width="14.28" height="1.2" fill="#b890cf" fill-opacity="0.6"/><rect x="0.00" y="148.35" width="22.44" height="1.2" fill="#a8a8a8" fill-opacity="0.6"/><rect x="0.00" y="150.50" width="12.24" height="1.2" fill="#b890cf" fill-opacity="0.6"/><rect x="13.26" y="150.50" width="13.26" height="1.2" fill="#d08070" fill-opacity="0.6"/><rect x="26.52" y="150.50" width="8.16" height="1.2" fill="#b890cf" fill-opacity="0.6"/></svg>
      <div class="a" style="left:536px;top:0;width:1px;height:610px;background:#e2e2e2"></div>
      <div class="a" style="left:537px;top:27px;width:16px;height:146px;background:#c3c3c3"></div>
      <div class="a" style="left:537px;top:98px;width:16px;height:2px;background:#6a6a6a"></div>
      <div class="a" style="left:535px;top:46px;width:2px;height:12px;background:#b5a83a"></div>
      <div class="a" style="left:534px;top:75px;width:2px;height:3px;background:#e0a040"></div>
      <div class="a" style="left:534px;top:81px;width:2px;height:3px;background:#e0a040"></div>
      <div class="a" style="left:534px;top:316px;width:3px;height:22px;background:#d6ecc8"></div>
      <div class="a" style="left:534px;top:365px;width:2px;height:6px;background:#e8b060"></div>
      <div class="a" style="left:534px;top:456px;width:2px;height:6px;background:#e8b060"></div>
<!--/MINIMAP-->
    </div>
<!--/CODE-->
    <div class="a" style="left:0;top:42px;width:553px;height:26px;background:#f3f3f3;border-bottom:1px solid #ebebeb"></div>
    <div class="a" style="left:24px;top:48.5px;font:bold 11.5px 'Liberation Sans';color:#c1ad37;letter-spacing:-0.6px">JS</div>
    <div class="a" style="left:46px;top:46px;font-size:15.5px;color:#6a6570">main.js</div>
    <svg class="a" style="left:99px;top:50px" width="8" height="12"><path d="M1.5 1L6.5 6L1.5 11" stroke="#6a6570" stroke-width="1.2" fill="none"/></svg>
    <svg class="a" style="left:113px;top:46px" width="17" height="17"><path d="M8.5 1L15.5 4.8V12.2L8.5 16L1.5 12.2V4.8Z M1.5 4.8L8.5 8.6L15.5 4.8M8.5 8.6V16" stroke="#7d4fb5" stroke-width="1.3" fill="none" stroke-linejoin="round"/></svg>
    <div class="a" style="left:135px;top:46px;font-size:16px;letter-spacing:-0.05px;color:#6a6570">buttonTouched</div>
  </div>
  <div id="sb" class="a">
    <div class="a" style="left:0;top:0;width:32px;height:25px;background:#4a3a6a"></div>
    <svg class="a" style="left:7px;top:5px" width="13" height="14"><path d="M1 6.5L5 10L1 13.5M12 1L8 4.5L12 8" stroke="#fff" stroke-width="1.3" fill="none"/></svg>
    <svg class="a" style="left:42px;top:5px" width="16" height="16"><circle cx="8" cy="8" r="6.8" stroke="#fff" stroke-width="1.3" fill="none"/><path d="M5.2 5.2L10.8 10.8M10.8 5.2L5.2 10.8" stroke="#fff" stroke-width="1.3"/></svg>
    <div class="a sbx" style="left:62px;top:7px">0</div>
    <svg class="a" style="left:74px;top:4px" width="17" height="16"><path d="M8.5 1.5L16 14.5H1Z" stroke="#fff" stroke-width="1.3" fill="none" stroke-linejoin="round"/><path d="M8.5 6V10.5M8.5 11.8V13" stroke="#fff" stroke-width="1.4"/></svg>
    <div class="a sbx" style="left:95px;top:7px">0</div>
    <div class="a" style="left:292px;top:0;width:41px;height:25px;background:#3b2c56"></div>
    <svg class="a" style="left:304px;top:4px" width="17" height="16"><circle cx="6.8" cy="6.8" r="5.6" stroke="#fff" stroke-width="1.5" fill="none"/><path d="M10.8 10.8L15.5 15.5" stroke="#fff" stroke-width="1.8"/><path d="M4 6.8H9.6M6.8 4V9.6" stroke="#fff" stroke-width="1.3"/></svg>
    <div class="a sbx" style="left:342px;top:6px">Ln 14, Col 39</div>
    <div class="a sbx" style="left:443px;top:6px">Spaces: 4</div>
    <div class="a sbx" style="left:521px;top:6px">UTF-8</div>
    <div class="a sbx" style="left:578px;top:6px">CRLF</div>
    <div class="a sbx" style="left:630px;top:2px;font-size:14px;letter-spacing:1px">{}</div>
    <div class="a sbx" style="left:653px;top:6px">JavaScript</div>
    <svg class="a" style="left:734px;top:4px" width="19" height="16"><path d="M0.5 10.5C0.5 7 3 6 4.5 6H14.5C16 6 18.5 7 18.5 10.5C18.5 14 15 15.3 9.5 15.3C4 15.3 0.5 14 0.5 10.5Z" fill="#fff"/><rect x="2.3" y="0.3" width="6.6" height="7" rx="2.6" fill="#fff"/><rect x="10.1" y="0.3" width="6.6" height="7" rx="2.6" fill="#fff"/><rect x="4.2" y="2.3" width="2.8" height="3" rx="0.8" fill="#6f5495"/><rect x="12" y="2.3" width="2.8" height="3" rx="0.8" fill="#6f5495"/><rect x="4.6" y="8.6" width="9.8" height="4.2" rx="1" fill="#6f5495"/><rect x="6.9" y="9.3" width="1.5" height="2.8" fill="#fff"/><rect x="10.6" y="9.3" width="1.5" height="2.8" fill="#fff"/></svg>
    <svg class="a" style="left:772px;top:4px" width="15" height="16"><path d="M2 12.5H13L11.5 10.5V6.5C11.5 4 9.8 2 7.5 2C5.2 2 3.5 4 3.5 6.5V10.5Z" stroke="#fff" stroke-width="1.3" fill="none" stroke-linejoin="round"/><path d="M6 14.3C6.5 15.3 8.5 15.3 9 14.3" stroke="#fff" stroke-width="1.2" fill="none"/></svg>
  </div>
</div>
<div id="edge" class="a">
    <div class="a" style="left:-1px;top:0;width:1px;height:715px;background:#8a8a8c"></div><div class="a" style="left:0;top:0;width:12px;height:715px;background:linear-gradient(to right,#cacbcf,#d6d7db 50%,#dfe0e4)"></div>
    <svg class="a" style="left:234px;top:8px" width="17" height="17"><circle cx="8.5" cy="8.5" r="7.3" stroke="#8a8a8e" stroke-width="1.1" fill="none"/><ellipse cx="8.5" cy="8.5" rx="3.3" ry="7.3" stroke="#8a8a8e" stroke-width="1.1" fill="none"/><path d="M1.2 8.5H15.8M2.5 4.8H14.5M2.5 12.2H14.5" stroke="#8a8a8e" stroke-width="1"/></svg>
    <div class="a" style="left:259px;top:10.5px;font-size:12.4px;color:#858589">Document</div>
    <div class="a" style="left:430px;top:16px;width:10px;height:1px;background:#777"></div>
    <div class="a" style="left:476px;top:12px;width:10px;height:10px;border:1px solid #777;border-radius:1.5px"></div>
    <svg class="a" style="left:522px;top:12px" width="10" height="10"><path d="M0.3 0.3L9.7 9.7M9.7 0.3L0.3 9.7" stroke="#777" stroke-width="1.1"/></svg>
    <svg class="a" style="left:12px;top:48px" width="17" height="15"><path d="M16 7.5H1.5M7.5 1.5L1.5 7.5L7.5 13.5" stroke="#9a9a9e" stroke-width="1.3" fill="none"/></svg>
    <svg class="a" style="left:47px;top:47px" width="18" height="18"><path d="M15.6 9.3A7 7 0 1 1 13.2 4" stroke="#1e1e22" stroke-width="1.25" fill="none"/><path d="M10.2 3.4H14.8V-1" stroke="#1e1e22" stroke-width="1.25" fill="none" transform="translate(0 2)"/></svg>
    <div class="a" style="left:80px;top:40px;width:313px;height:32px;background:#fbfbfb;border:1px solid #d0d0d4;border-radius:16px"></div>
    <svg class="a" style="left:98px;top:49px" width="16" height="15"><circle cx="6.5" cy="6.3" r="5" stroke="#2a2a2e" stroke-width="1.2" fill="none"/><path d="M10 9.8L14.3 14.1" stroke="#2a2a2e" stroke-width="1.3"/></svg>
    <div class="a" style="left:129px;top:47.5px;font-size:14.2px;letter-spacing:-0.15px;color:#2a2a2e">Cari atau masukkan alamat web</div>
    <svg class="a" style="left:409px;top:46px" width="20" height="20"><path d="M11.17 6.61 L9.00 1.40 L6.83 6.61 L1.20 7.07 L5.48 10.74 L4.18 16.23 L9.00 13.30" stroke="#1a1a1a" stroke-width="1.3" fill="none" stroke-linejoin="round"/><path d="M11.5 7.3H17.3M12 10.5H17.3M11 13.6H17.3" stroke="#1a1a1a" stroke-width="1.3"/></svg>
    <div class="a" style="left:442px;top:45px;width:23px;height:23px;border-radius:50%;background:#d6d6d9;overflow:hidden"><div class="a" style="left:7px;top:4px;width:9px;height:9px;border-radius:50%;background:#8b8b8e"></div><div class="a" style="left:3px;top:14px;width:17px;height:12px;border-radius:50%;background:#8b8b8e"></div></div>
    <svg class="a" style="left:483px;top:54px" width="15" height="4"><circle cx="2" cy="2" r="1.5" fill="#222"/><circle cx="7.5" cy="2" r="1.5" fill="#222"/><circle cx="13" cy="2" r="1.5" fill="#222"/></svg>
    <svg class="a" style="left:517px;top:46px" width="22" height="20" viewBox="0 0 22 20"><defs><linearGradient id="cpaa" x1="0" y1="0" x2="0" y2="1"><stop offset="0" stop-color="#1aa8f0"/><stop offset="0.3" stop-color="#1d7fd8"/><stop offset="0.55" stop-color="#3aa068"/><stop offset="1" stop-color="#f2c010"/></linearGradient><linearGradient id="cpab" x1="0" y1="0" x2="0" y2="1"><stop offset="0" stop-color="#a050e8"/><stop offset="0.35" stop-color="#e050b0"/><stop offset="0.7" stop-color="#f56a78"/><stop offset="1" stop-color="#f8a050"/></linearGradient></defs><path d="M4 3Q5 0 8 0H15Q17.5 0 18 2.5L18.5 5H12Q10 5 9.3 7.5L7 15.5Q6.5 16.5 5 16.5H2.5Q0 16.5 0.4 14Z" fill="url(#cpaa)"/><path d="M18 17Q17 20 14 20H7Q4.5 20 4 17.5L3.5 15H10Q12 15 12.7 12.5L15 4.5Q15.5 3.5 17 3.5H19.5Q22 3.5 21.6 6Z" fill="url(#cpab)"/><path d="M12 0H15Q17.5 0 18 2.5L18.5 5H12Q11 5 10.5 5.5Z" fill="#1a4fd0" opacity="0.7"/><path d="M10 20H7Q4.5 20 4 17.5L3.5 15H10Q11 15 11.5 14.5Z" fill="#f05a20" opacity="0.6"/></svg>
    <svg class="a" style="left:15px;top:86px" width="15" height="15"><rect x="0.8" y="0.8" width="13.4" height="13.4" rx="2.5" stroke="#1a1a1a" stroke-width="1.5" fill="none"/><path d="M1 4.5H14" stroke="#1a1a1a" stroke-width="1.5"/><rect x="1" y="4" width="4" height="10" fill="#1a1a1a"/></svg>
    <div class="a" style="left:8px;top:112px;width:32px;height:32px;background:#f9f9f9;border-radius:6px;box-shadow:0 1px 2px rgba(0,0,0,0.18)"></div>
    <svg class="a" style="left:15px;top:119px" width="18" height="18"><circle cx="9" cy="9" r="7.6" stroke="#1e1e1e" stroke-width="1.3" fill="none"/><ellipse cx="9" cy="9" rx="3.4" ry="7.6" stroke="#1e1e1e" stroke-width="1.2" fill="none"/><path d="M1.4 9H16.6M2.8 5.2H15.2M2.8 12.8H15.2" stroke="#1e1e1e" stroke-width="1.1"/></svg>
    <div class="a" style="left:8px;top:148px;width:32px;height:1px;background:#8e8e92"></div>
    <svg class="a" style="left:16.5px;top:161.5px" width="14" height="14"><path d="M7 0V14M0 7H14" stroke="#1e1e1e" stroke-width="1.1"/></svg>
    <div class="a" style="left:51px;top:76px;width:495px;height:635px;border-radius:8px;overflow:hidden;background:#fff">
      <div class="a" style="left:0;top:0;width:480px;height:611px;background:linear-gradient(176deg,#7ec0bc 0px,#8d9ec4 135px,#9c78c6 250px,#a856c7 345px,#a855c7 640px)">
        <div class="a" style="left:0;top:20px;width:480px;text-align:center;font:bold 32px 'Liberation Sans';color:#fff">Simpel To-Do-List</div>
        <div class="a" style="left:0;top:80px;width:480px;text-align:center;font-size:18px;line-height:23.6px;color:#fff;-webkit-text-stroke:0.25px #fff">"Lorem Ipsum ga rimsvek banget wok, apa<br>kabar tugu lorem ipsum di ikn dawg."</div>
        <div class="a" style="left:79px;top:146px;width:268px;height:55px;background:#fff;border-radius:10px"></div>
        <div class="a" style="left:89px;top:166px;font-size:13.2px;color:#757575">Masukkan teks..</div>
        <div class="a" style="left:351px;top:145px;width:50px;height:56px;background:#fff;border-radius:10px"></div>
        <svg class="a" style="left:372.5px;top:168.5px" width="8" height="8"><path d="M4 0.5V7.5M0.5 4H7.5" stroke="#111" stroke-width="1.1"/></svg>
        <div class="a" style="left:82px;top:251px;width:259px;height:60px;background:#fff;border-radius:10px"></div><div class="a" style="left:88px;top:271px;font:italic 16px 'Liberation Sans';color:#000;padding-top:1px">1. Bangun</div><div class="a" style="left:349px;top:256px;width:50px;height:50px;background:#fff;border-radius:9px"></div><div class="a" style="left:369px;top:281px;width:8px;height:1.2px;background:#222"></div>
<div class="a" style="left:82px;top:321px;width:259px;height:60px;background:#fff;border-radius:10px"></div><div class="a" style="left:88px;top:341px;font:italic 16px 'Liberation Sans';color:#000;padding-top:1px">2. Makan</div><div class="a" style="left:349px;top:326px;width:50px;height:50px;background:#fff;border-radius:9px"></div><div class="a" style="left:369px;top:351px;width:8px;height:1.2px;background:#222"></div>
<div class="a" style="left:82px;top:391px;width:259px;height:60px;background:#fff;border-radius:10px"></div><div class="a" style="left:88px;top:411px;font:italic 16px 'Liberation Sans';color:#000;padding-top:1px">3. Mandi</div><div class="a" style="left:349px;top:396px;width:50px;height:50px;background:#fff;border-radius:9px"></div><div class="a" style="left:369px;top:421px;width:8px;height:1.2px;background:#222"></div>
<div class="a" style="left:82px;top:461px;width:259px;height:60px;background:#fff;border-radius:10px"></div><div class="a" style="left:88px;top:481px;font:italic 16px 'Liberation Sans';color:#000;padding-top:1px">4. Tidur</div><div class="a" style="left:349px;top:466px;width:50px;height:50px;background:#fff;border-radius:9px"></div><div class="a" style="left:369px;top:491px;width:8px;height:1.2px;background:#222"></div>

      </div>
      <div class="a" style="left:0;top:611px;width:480px;height:24px;background:#808080;text-align:center;font-size:18px;line-height:24px;color:#fff;-webkit-text-stroke:0.25px #fff">© Ceritanya copyright disini, lol.</div>
      <div class="a" style="left:480px;top:0;width:15px;height:635px;background:#fff"></div>
      <svg class="a" style="left:485px;top:9px" width="9" height="7"><path d="M4.5 0L9 6H0Z" fill="#a3a3a3"/></svg>
      <div class="a" style="left:484px;top:22px;width:8px;height:571px;background:#8b8b8b;border-radius:4px"></div>
      <svg class="a" style="left:485px;top:621px" width="9" height="7"><path d="M0 0H9L4.5 6Z" fill="#a3a3a3"/></svg>
    </div>
  </div>
<div id="task" class="a">
    <svg class="a" style="left:10px;top:16px" width="24" height="22"><path d="M1 10C2 3 8 1 11 1C16 1 21 4 22 10C20 8.5 18 8.5 16.5 10C15 8.5 13 8.5 11.5 10C10 8.5 8 8.5 6.5 10C5 8.5 3 8.5 1 10Z" fill="#7cc0f2"/><path d="M11.5 10V19C11.5 21 8.5 21 8.5 19" stroke="#666" stroke-width="1.6" fill="none"/></svg>
    <div class="a" style="left:21px;top:7px;width:16px;height:16px;border-radius:50%;background:#c42b1c;color:#fff;font:bold 11px 'Liberation Sans';text-align:center;line-height:16px">4</div>
    <div class="a" style="left:41px;top:10.5px;font-size:12px;color:#1e1e1e">Hari hujan yang...</div>
    <div class="a" style="left:41px;top:26px;font-size:12px;color:#5d5d5d">27°C</div>
    <svg class="a" style="left:397px;top:14px" width="24" height="23"><defs><linearGradient id="wg" x1="0" y1="0" x2="1" y2="1"><stop offset="0" stop-color="#3cc4f5"/><stop offset="1" stop-color="#0a78d8"/></linearGradient></defs><rect x="0" y="0" width="11" height="10.8" fill="url(#wg)"/><rect x="12.5" y="0" width="11" height="10.8" fill="url(#wg)"/><rect x="0" y="12.2" width="11" height="10.8" fill="url(#wg)"/><rect x="12.5" y="12.2" width="11" height="10.8" fill="url(#wg)"/></svg>
    <div class="a" style="left:434px;top:10px;width:218px;height:30px;border-radius:15px;background:#f9f2f1;border:1px solid #e6dcdc"></div>
    <svg class="a" style="left:444px;top:18px" width="16" height="16"><circle cx="6.5" cy="6.5" r="5.3" stroke="#222" stroke-width="1.7" fill="none"/><path d="M10.3 10.3L14.5 14.5" stroke="#222" stroke-width="1.9"/></svg>
    <div class="a" style="left:470px;top:17.5px;font-size:13.6px;color:#5e5a5a">Pencarian</div>
    <svg class="a" style="left:598px;top:13px" width="52" height="24"><ellipse cx="26" cy="18" rx="20" ry="5" fill="#5aa8e0"/><path d="M3 13C6 6 12 3 18 4C24 0 34 1 38 4C44 3 50 8 50 14L48 17H4Z" fill="#e0883a"/><rect x="8" y="9" width="8" height="6" fill="#c85a5a"/><rect x="18" y="8" width="9" height="7" fill="#8ab8d8"/><rect x="29" y="8" width="8" height="7" fill="#e8e8f0"/><rect x="39" y="9" width="8" height="6" fill="#6a8ac8"/><rect x="5" y="15" width="44" height="2.5" fill="#3a9a4a"/></svg>
    <div class="a" style="left:664px;top:13px;width:25px;height:22px">
      <div class="a" style="left:9px;top:0;width:16px;height:15px;background:#e6e6e6;border:1px solid #bdbdbd;border-radius:2px"></div>
      <div class="a" style="left:0;top:7px;width:16px;height:15px;background:#1f1f1f;border-radius:2px"></div>
    </div>
    <svg class="a" style="left:710px;top:14px" width="22" height="20" viewBox="0 0 22 20"><defs><linearGradient id="cpba" x1="0" y1="0" x2="0" y2="1"><stop offset="0" stop-color="#1aa8f0"/><stop offset="0.3" stop-color="#1d7fd8"/><stop offset="0.55" stop-color="#3aa068"/><stop offset="1" stop-color="#f2c010"/></linearGradient><linearGradient id="cpbb" x1="0" y1="0" x2="0" y2="1"><stop offset="0" stop-color="#a050e8"/><stop offset="0.35" stop-color="#e050b0"/><stop offset="0.7" stop-color="#f56a78"/><stop offset="1" stop-color="#f8a050"/></linearGradient></defs><path d="M4 3Q5 0 8 0H15Q17.5 0 18 2.5L18.5 5H12Q10 5 9.3 7.5L7 15.5Q6.5 16.5 5 16.5H2.5Q0 16.5 0.4 14Z" fill="url(#cpba)"/><path d="M18 17Q17 20 14 20H7Q4.5 20 4 17.5L3.5 15H10Q12 15 12.7 12.5L15 4.5Q15.5 3.5 17 3.5H19.5Q22 3.5 21.6 6Z" fill="url(#cpbb)"/><path d="M12 0H15Q17.5 0 18 2.5L18.5 5H12Q11 5 10.5 5.5Z" fill="#1a4fd0" opacity="0.7"/><path d="M10 20H7Q4.5 20 4 17.5L3.5 15H10Q11 15 11.5 14.5Z" fill="#f05a20" opacity="0.6"/></svg>
    <svg class="a" style="left:752px;top:13px" width="26" height="23"><path d="M1 2.5C1 1.5 1.5 1 2.5 1H9L11 3H23.5C24.5 3 25 3.5 25 4.5V21C25 22 24.5 22.5 23.5 22.5H2.5C1.5 22.5 1 22 1 21Z" fill="#f5c842"/><path d="M1 2.5C1 1.5 1.5 1 2.5 1H9L11 3H1Z" fill="#d9a23a"/><rect x="1" y="6" width="24" height="16.5" rx="1" fill="#fbd54e"/><rect x="7" y="14" width="12" height="8.5" rx="1.5" fill="#1b8ed8"/></svg>
    <div class="a" style="left:761px;top:41px;width:7px;height:3px;border-radius:2px;background:#7a7478"></div>
    <svg class="a" style="left:796px;top:12px" width="26" height="25" viewBox="0 0 26 26"><defs><linearGradient id="eg1" x1="0" y1="0" x2="1" y2="1"><stop offset="0" stop-color="#3ed0a0"/><stop offset="0.5" stop-color="#2aa8e0"/><stop offset="1" stop-color="#1868c8"/></linearGradient></defs><circle cx="13" cy="13" r="12.5" fill="url(#eg1)"/><path d="M25.5 13C25.5 18 21 20 17 19C12 18 11 14 13 12C14.5 10.5 17 11 18 12.5C19 10 17.5 6 13 6C7 6 3 11 3.5 16C2 13 1 8 4 5C7 2 12 1.5 16 2.5C21 3.5 25.5 8 25.5 13Z" fill="#62d26a" opacity="0.85"/><path d="M13 12C9 10 4 13 4 18C5 22 9 25 13 25.5C9 23 8 18 10 16" fill="#0e4ea8" opacity="0.8"/></svg>
    <div class="a" style="left:806px;top:41px;width:7px;height:3px;border-radius:2px;background:#7a7478"></div>
    <svg class="a" style="left:841px;top:13px" width="23" height="24"><path d="M6.5 7V4.5C6.5 2 8.5 1 11.5 1C14.5 1 16.5 2 16.5 4.5V7" stroke="#3ab0f0" stroke-width="1.8" fill="none"/><rect x="0" y="6" width="23" height="18" rx="2.5" fill="#1b4a8e"/><rect x="6.5" y="10" width="4.5" height="4.5" fill="#f25022"/><rect x="12" y="10" width="4.5" height="4.5" fill="#7fba00"/><rect x="6.5" y="15.5" width="4.5" height="4.5" fill="#00a4ef"/><rect x="12" y="15.5" width="4.5" height="4.5" fill="#ffb900"/></svg>
    <div class="a" style="left:850px;top:41px;width:7px;height:3px;border-radius:2px;background:#7a7478"></div>
    <svg class="a" style="left:887px;top:18px" width="20" height="14"><rect x="0" y="0" width="20" height="14" rx="4" fill="#f0143c"/><path d="M8 4V10L13 7Z" fill="#fff"/></svg>
    <div class="a" style="left:922px;top:6px;width:38px;height:38px;border-radius:5px;background:#f8efed"></div>
    <svg class="a" style="left:927px;top:12px" width="27" height="27" viewBox="0 6 24 21"><path d="M3.2 19.8L16.8 8.6" stroke="#1567b8" stroke-width="3.2" stroke-linecap="round"/><path d="M3.2 13.2L16.8 24.6" stroke="#1b82d2" stroke-width="3.2" stroke-linecap="round"/><path d="M15.8 8.2L19 6.9L21 8.2V24.8L19 26.1L15.8 24.8Z" fill="#24a0ee"/></svg>
    <div class="a" style="left:933px;top:41px;width:16px;height:3px;border-radius:2px;background:#1a7fd0"></div>
    <svg class="a" style="left:1133px;top:21px" width="12" height="8"><path d="M1 7L6 1.5L11 7" stroke="#222" stroke-width="1.5" fill="none"/></svg>
    <svg class="a" style="left:1162px;top:18px" width="18" height="16"><path d="M3.5 12.5C1.5 12.5 0.5 11 0.5 9.5C0.5 7.5 2 6.5 3.5 6.5C4 3 6.5 1 9 1C12 1 14 3 14.5 6C16 6 17 7 17 8.5" fill="#9a9a9a" stroke="#555" stroke-width="0.9"/><circle cx="12.5" cy="11" r="5" fill="#1a84da"/><path d="M12.5 10V13.5M12.5 8V8.8" stroke="#fff" stroke-width="1.4"/></svg>
    <svg class="a" style="left:1195px;top:19px" width="17" height="13"><path d="M1 5C5 1 12 1 16 5M3.5 7.5C6.5 4.5 10.5 4.5 13.5 7.5M6 10C7.5 8.5 9.5 8.5 11 10" stroke="#222" stroke-width="1.3" fill="none"/><circle cx="8.5" cy="11.5" r="1.3" fill="#222"/></svg>
    <svg class="a" style="left:1219px;top:19px" width="16" height="13"><path d="M1 4.5H4L8 1V12L4 8.5H1Z" stroke="#222" stroke-width="1.2" fill="none" stroke-linejoin="round"/><path d="M10.5 4C11.5 5.5 11.5 7.5 10.5 9M12.8 2.5C14.5 5 14.5 8 12.8 10.5" stroke="#222" stroke-width="1.1" fill="none"/></svg>
    <svg class="a" style="left:1243px;top:20px" width="17" height="11"><rect x="0.7" y="0.7" width="13.6" height="9.6" rx="2" stroke="#222" stroke-width="1.3" fill="none"/><rect x="2.5" y="2.5" width="3" height="6" fill="#222"/><rect x="14.5" y="3.5" width="2" height="4" fill="#222"/></svg>
    <div class="a" style="left:1276px;top:10px;width:62px;text-align:right;font-size:12px;color:#1e1e1e;line-height:16px">21.41<br>12/10/2025</div>
  </div>
</body></html>
